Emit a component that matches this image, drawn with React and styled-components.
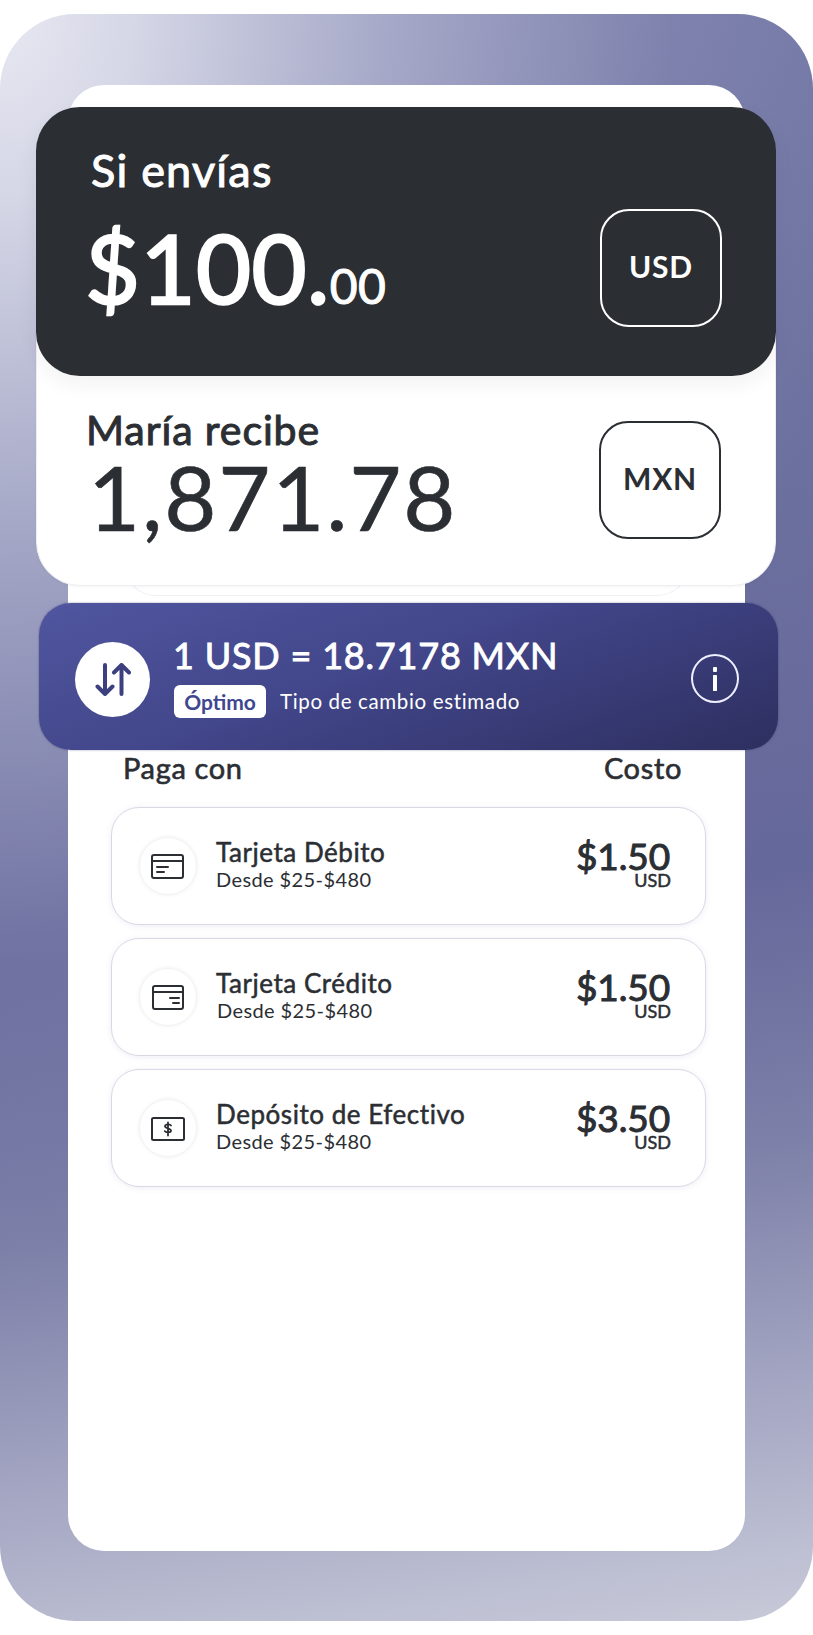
import React from "react";
import styled, { createGlobalStyle } from "styled-components";

const Global = createGlobalStyle`
  html, body { margin: 0; padding: 0; background: #fff; }
  * { box-sizing: border-box; }
  body { font-family: "Lato", "Open Sans", sans-serif; color: #2b2e33; }
`;
const Page = styled.div`
  width: 813px; height: 1635px; padding-top: 14px;
`;
const Frame = styled.div`
  height: 1607px; border-radius: 75px; padding: 71px 68px 0;
  background:
    radial-gradient(ellipse 860px 1180px at 0 0, rgba(232,232,242,1) 0%, rgba(222,223,236,.92) 15%, rgba(190,192,216,.66) 45%, rgba(150,153,190,.26) 78%, rgba(120,124,168,0) 100%),
    linear-gradient(172deg, #787ca9 0%, #6d719f 30%, #65689a 56%, #7d80a8 72%, #a9abc6 88%, #c8cad9 100%);
`;
const Panel = styled.div`
  height: 1466px; background: #fff; border-radius: 36px; padding-top: 22px;
`;
const SendCard = styled.section`
  position: relative; z-index: 3;
  margin: 0 -31px 0 -32px; height: 269px; border-radius: 44px;
  background: #2b2e33; color: #fff;
  padding: 38px 54px 0 55px;
  display: flex; justify-content: space-between;
  box-shadow: 0 8px 20px rgba(40,40,60,.06);
`;
const ReceiveCard = styled.section`
  position: relative; z-index: 2;
  margin: -46px -31px 0 -32px; height: 256px; border-radius: 0 0 44px 44px;
  background: #fff; border: 1px solid #eceef2; border-top: 0;
  padding: 80px 54px 0 49px;
  display: flex; justify-content: space-between;
  box-shadow: 0 1px 3px rgba(40,40,60,.05);
`;
const GhostCard = styled.div`
  position: relative; z-index: 1;
  margin: -30px 56px 0; height: 40px; border-radius: 0 0 32px 32px;
  border: 1px solid #f0f0f4; border-top: 0; background: #fff;
`;
const Amounts = styled.div`display: flex; flex-direction: column;`;
const SendLabel = styled.div`
  font-size: 45px; line-height: 50px; font-weight: 400; letter-spacing: 1.2px;
  -webkit-text-stroke: 1px #fff;
`;
const ReceiveLabel = styled.div`
  font-size: 41px; line-height: 40px; font-weight: 400; letter-spacing: .9px;
  -webkit-text-stroke: 1px #2b2e33;
`;
const BigAmount = styled.div`
  margin: 22px 0 0 -6px; font-size: 95px; line-height: 100px; font-weight: 400; letter-spacing: .4px; white-space: nowrap;
  -webkit-text-stroke: 2.4px #fff;
`;
const Cents = styled.span`font-size: 48px; letter-spacing: .4px; -webkit-text-stroke: 1px #fff;`;
const ReceivedAmount = styled.div`
  margin: 1px 0 0 2px; font-size: 90px; line-height: 90px; font-weight: 400; letter-spacing: 1.8px; white-space: nowrap;
  -webkit-text-stroke: .6px #2b2e33;
`;
const CurrencyBox = styled.div`
  width: 122px; height: 118px; border-radius: 29px; margin-top: ${p => p.$top}px;
  border: 2px solid ${p => p.$light ? "#fff" : "#2b2e33"};
  display: flex; align-items: center; justify-content: center; padding-bottom: ${p => p.$pad}px;
  font-size: 30px; font-weight: 700; letter-spacing: .8px;
`;
const RateBand = styled.section`
  position: relative; z-index: 4;
  margin: 7px -33px 0 -29px; height: 147px; border-radius: 32px;
  background: linear-gradient(160deg, #50569f 0%, #42468a 45%, #2d2f5f 100%);
  color: #fff; padding: 0 39px 0 36px;
  display: flex; align-items: center;
  box-shadow: 0 0 2px rgba(30,30,80,.5);
`;
const SwapCircle = styled.div`
  width: 75px; height: 75px; border-radius: 50%; background: #fff; flex: none;
  display: flex; align-items: center; justify-content: center; margin-top: 6px;
`;
const RateText = styled.div`
  margin-left: 23px; flex: 1; display: flex; flex-direction: column; padding-bottom: 3px;
`;
const RateValue = styled.div`
  font-size: 36px; line-height: 44px; font-weight: 400; letter-spacing: .8px;
  -webkit-text-stroke: .9px #fff;
`;
const RateMeta = styled.div`display: flex; align-items: center; margin-top: 8px;`;
const Badge = styled.span`
  height: 33px; width: 92px; margin-left: 1px; background: #fff; border-radius: 6px; color: #40468f;
  font-size: 21px; font-weight: 700; display: flex; align-items: center; justify-content: center;
`;
const MetaText = styled.span`margin-left: 14px; font-size: 20.5px; letter-spacing: .65px;`;
const InfoIcon = styled.div`
  width: 48px; height: 49px; border-radius: 50%; border: 2px solid #eef; flex: none;
  display: flex; align-items: center; justify-content: center; margin-top: 4px;
`;
const Head = styled.div`
  display: flex; justify-content: space-between; margin: 0 63px 22px 55px; height: 35px;
  align-items: center; font-size: 29px; font-weight: 400; letter-spacing: .65px;
  -webkit-text-stroke: .6px #2b2e33;
`;
const Methods = styled.div`
  display: flex; flex-direction: column; gap: 13px; margin: 0 39px 0 43px;
`;
const Method = styled.div`
  height: 118px; border-radius: 28px; border: 1px solid #d9d9e6; background: #fff;
  box-shadow: 0 1px 6px rgba(90,90,170,.1);
  display: flex; align-items: center; padding: 0 34px 0 27px;
`;
const MethodIcon = styled.div`
  width: 58px; height: 58px; border-radius: 50%; border: 1px solid #f2f2f2; flex: none;
  display: flex; align-items: center; justify-content: center;
  box-shadow: 0 0 4px rgba(0,0,0,.07);
`;
const MethodText = styled.div`
  margin-left: 19px; flex: 1; display: flex; flex-direction: column; padding-bottom: 5px;
`;
const MethodName = styled.div`
  font-size: 26px; line-height: 30px; font-weight: 400; letter-spacing: .55px;
  -webkit-text-stroke: .5px #2b2e33;
`;
const MethodRange = styled.div`
  font-size: 20px; line-height: 24px; letter-spacing: .4px; margin-left: ${p => p.$shift || 0}px;
`;
const Fee = styled.div`display: flex; flex-direction: column; align-items: flex-end; margin-top: -8px;`;
const FeeValue = styled.div`
  font-size: 37px; line-height: 38px; font-weight: 400; letter-spacing: -.1px; margin-right: 1px;
  -webkit-text-stroke: 1px #2b2e33;
`;
const FeeUnit = styled.div`
  font-size: 18px; line-height: 14px; font-weight: 400; margin-top: -2px;
  -webkit-text-stroke: .5px #2b2e33;
`;

const Ico = p => <svg width="40" height="28" viewBox="0 0 40 28" fill="none" stroke="#2b2e33" strokeWidth="2" strokeLinecap="round" strokeLinejoin="round" {...p} />;
const DebitIcon = () => (
  <Ico><rect x="4" y="3" width="31" height="23" rx="2" /><path d="M4 9h31M9 15h11M9 20h7" /></Ico>
);
const CreditIcon = () => (
  <Ico><rect x="5" y="3" width="30" height="23" rx="2" /><path d="M5 9h30M22 15h9M25 20h6" /></Ico>
);
const CashIcon = () => (
  <Ico><rect x="4" y="4" width="32" height="22" rx="1.5" /><path d="M23 11.5c-.6-1.4-5.6-1.7-6 .6-.4 2.6 6.3 1.8 6 4.7-.3 2-5.4 1.9-6.2.3M20 8.5v13" strokeWidth="1.8" /></Ico>
);

const methods = [
  { name: "Tarjeta Débito", fee: "$1.50", Icon: DebitIcon },
  { name: "Tarjeta Crédito", fee: "$1.50", Icon: CreditIcon, shift: 1 },
  { name: "Depósito de Efectivo", fee: "$3.50", Icon: CashIcon },
];

export default function App() {
  return (
    <Page>
      <Global />
      <Frame>
        <Panel>
          <SendCard>
            <Amounts>
              <SendLabel>Si envías</SendLabel>
              <BigAmount>$100.<Cents>00</Cents></BigAmount>
            </Amounts>
            <CurrencyBox $light $top={64} $pad={4}>USD</CurrencyBox>
          </SendCard>
          <ReceiveCard>
            <Amounts>
              <ReceiveLabel>María recibe</ReceiveLabel>
              <ReceivedAmount>1,871.78</ReceivedAmount>
            </Amounts>
            <CurrencyBox $top={11} $pad={4}>MXN</CurrencyBox>
          </ReceiveCard>
          <GhostCard />
          <RateBand>
            <SwapCircle>
              <svg width="36" height="33" viewBox="0 0 36 33" fill="none" stroke="#3c407f" strokeWidth="4" strokeLinecap="round" strokeLinejoin="round">
                <path d="M10 2v29M2.5 23.5l7.5 7.5 7.5-7.5" />
                <path d="M26.5 31V2M19 9.5l7.5-7.5 7.5 7.5" />
              </svg>
            </SwapCircle>
            <RateText>
              <RateValue>1 USD = 18.7178 MXN</RateValue>
              <RateMeta>
                <Badge>Óptimo</Badge>
                <MetaText>Tipo de cambio estimado</MetaText>
              </RateMeta>
            </RateText>
            <InfoIcon>
              <svg width="6" height="24" viewBox="0 0 6 24" fill="#fff"><rect x="1" y="0" width="4" height="5" rx="1" /><rect x="1" y="8" width="4" height="16" rx=".5" /></svg>
            </InfoIcon>
          </RateBand>
          <Head><span>Paga con</span><span>Costo</span></Head>
          <Methods>
            {methods.map(({ name, fee, Icon, shift }) => (
              <Method key={name}>
                <MethodIcon><Icon /></MethodIcon>
                <MethodText>
                  <MethodName>{name}</MethodName>
                  <MethodRange $shift={shift}>Desde $25-$480</MethodRange>
                </MethodText>
                <Fee>
                  <FeeValue>{fee}</FeeValue>
                  <FeeUnit>USD</FeeUnit>
                </Fee>
              </Method>
            ))}
          </Methods>
        </Panel>
      </Frame>
    </Page>
  );
}
